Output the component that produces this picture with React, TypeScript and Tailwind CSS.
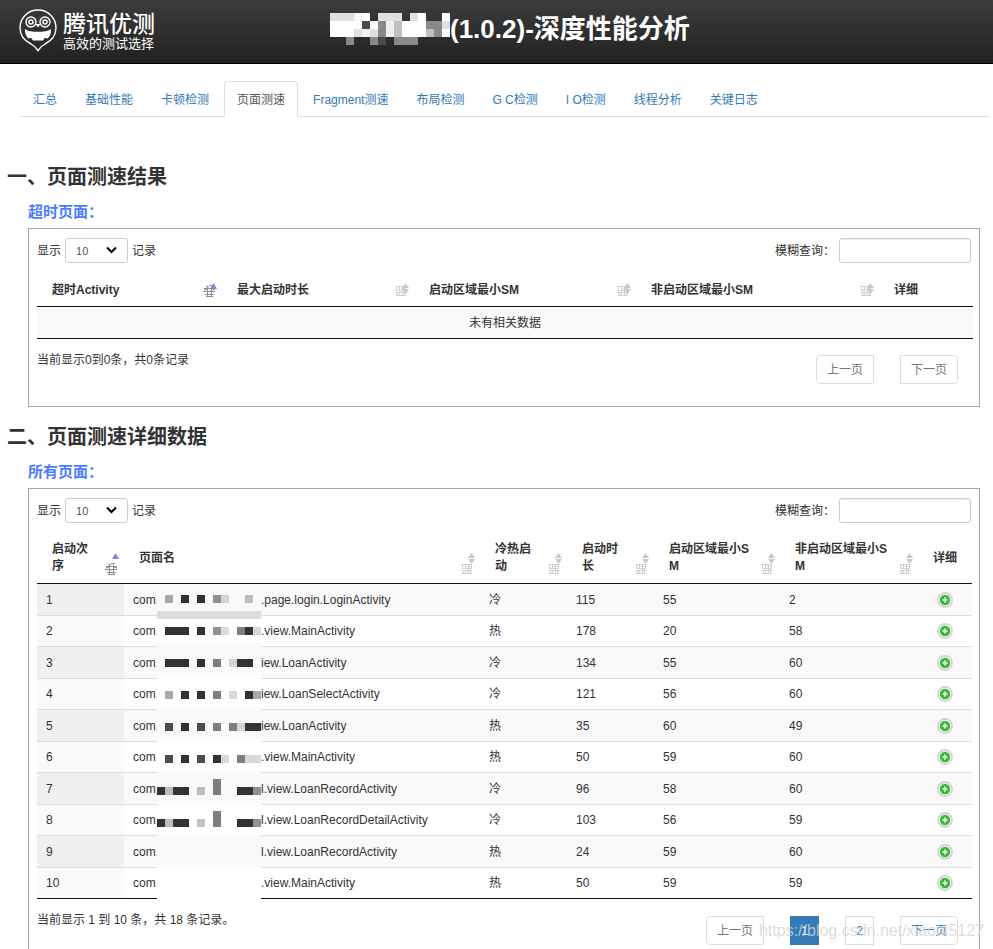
import type { ReactNode } from "react";

const tabs = ["汇总", "基础性能", "卡顿检测", "页面测速", "Fragment测速", "布局检测", "G C检测", "I O检测", "线程分析", "关键日志"];

type Row = [name: string, start: string, time: number, sm: number, idleSm: number];

const rows: Row[] = [
  [".page.login.LoginActivity", "冷", 115, 55, 2],
  [".view.MainActivity", "热", 178, 20, 58],
  ["iew.LoanActivity", "冷", 134, 55, 60],
  ["iew.LoanSelectActivity", "冷", 121, 56, 60],
  ["iew.LoanActivity", "热", 35, 60, 49],
  [".view.MainActivity", "热", 50, 59, 60],
  ["l.view.LoanRecordActivity", "冷", 96, 58, 60],
  ["l.view.LoanRecordDetailActivity", "冷", 103, 56, 59],
  ["l.view.LoanRecordActivity", "热", 24, 59, 60],
  [".view.MainActivity", "热", 50, 59, 59],
];

// Each block: column, top, span in columns, shade, height
type Block = [col: number, top: number, span: number, shade: string, height?: number];

const titleBlocks: Block[] = [
  [0, 0, 3, "#e0e0e0"], [3, 0, 1, "#f7f7f7"], [4, 0, 1, "#fff"], [6, 0, 3, "#e0e0e0"], [10, 0, 1, "#e0e0e0"], [11, 0, 1, "#fff"], [14, 0, 1, "#fff"],
  [0, 8, 4, "#fff"], [4, 8, 1, "#4a4a4a"], [5, 8, 1, "#fff"], [6, 8, 1, "#8a8a8a"], [7, 8, 1, "#f0f0f0"], [8, 8, 1, "#c0c0c0"], [9, 8, 3, "#fff"], [12, 8, 2, "#8a8a8a"], [14, 8, 1, "#e0e0e0"],
  [0, 16, 3, "#fff"], [3, 16, 1, "#e0e0e0"], [4, 16, 1, "#f0f0f0"], [5, 16, 1, "#e0e0e0"], [6, 16, 1, "#8a8a8a"], [7, 16, 1, "#f0f0f0"], [8, 16, 1, "#c0c0c0"], [9, 16, 3, "#fff"], [12, 16, 1, "#c0c0c0"], [13, 16, 1, "#8a8a8a"], [14, 16, 1, "#fff"],
  [2, 24, 1, "#8a8a8a"], [5, 24, 1, "#8a8a8a"], [6, 24, 1, "#4a4a4a"], [8, 24, 3, "#8a8a8a"],
];

const nameBlocks: Block[] = [
  [0, 0, 13, "#f9f9f9", 24], [0, 24, 13, "#ddd"], [0, 32, 13, "#fff", 24],
  [0, 56, 13, "#f9f9f9", 32], [0, 88, 13, "#fff", 32], [0, 120, 13, "#f9f9f9", 32],
  [0, 152, 13, "#fff", 32], [0, 184, 13, "#f9f9f9", 32], [0, 216, 13, "#fff", 32],
  [0, 248, 13, "#f9f9f9", 32], [0, 280, 13, "#fff", 34],
  [1, 8, 1, "#a8a8a8"], [3, 8, 1, "#333"], [5, 8, 1, "#333"], [7, 8, 1, "#909090"], [8, 8, 1, "#d4d4d4"], [11, 8, 1, "#bdbdbd"],
  [1, 40, 3, "#333"], [5, 40, 1, "#333"], [7, 40, 1, "#909090"], [8, 40, 1, "#dcdcdc"], [10, 40, 1, "#7d7d7d"], [11, 40, 1, "#333"], [12, 40, 1, "#d8d8d8"],
  [1, 72, 3, "#333"], [5, 72, 1, "#333"], [7, 72, 1, "#7d7d7d"], [9, 72, 1, "#d4d4d4"], [10, 72, 2, "#333"],
  [1, 104, 1, "#a8a8a8"], [3, 104, 1, "#333"], [5, 104, 1, "#333"], [7, 104, 1, "#7d7d7d"], [9, 104, 1, "#dadada"], [11, 104, 1, "#333"], [12, 104, 1, "#a8a8a8"],
  [1, 136, 1, "#4a4a4a"], [3, 136, 1, "#333"], [5, 136, 1, "#4a4a4a"], [7, 136, 1, "#7d7d7d"], [9, 136, 1, "#7d7d7d"], [10, 136, 1, "#d4d4d4"], [11, 136, 2, "#333"],
  [1, 168, 1, "#4a4a4a"], [3, 168, 1, "#333"], [5, 168, 1, "#4a4a4a"], [7, 168, 1, "#333"], [8, 168, 1, "#d8d8d8"], [10, 168, 1, "#7d7d7d"], [11, 168, 2, "#d8d8d8"],
  [0, 200, 1, "#333"], [1, 200, 1, "#bdbdbd"], [2, 200, 2, "#333"], [5, 200, 1, "#bdbdbd"], [7, 192, 1, "#7d7d7d", 16], [10, 200, 2, "#333"], [12, 200, 1, "#909090"],
  [0, 232, 1, "#333"], [1, 232, 1, "#bdbdbd"], [2, 232, 2, "#333"], [5, 232, 1, "#c4c4c4"], [7, 224, 1, "#7d7d7d", 16], [10, 232, 2, "#333"], [12, 232, 1, "#909090"],
];

function Mosaic({ blocks, width, height, className }: { blocks: Block[]; width: number; height: number; className: string }) {
  return (
    <svg className={className} width={width} height={height} shapeRendering="crispEdges" aria-hidden="true">
      {blocks.map(([col, top, span, shade, h = 8], i) => (
        <rect key={i} x={col * 8} y={top} width={span * 8} height={h} fill={shade} />
      ))}
    </svg>
  );
}

function OwlLogo() {
  return (
    <svg className="h-[43px] w-[38px] shrink-0" viewBox="0 0 38 43" fill="none" stroke="#fff" aria-hidden="true">
      <path d="M19 41.500c-1.800-2.800-3.600-4.700-7-6.500C5.600 31.800 1 26.500 1 18.800 1 8.800 9 1 19 1s18 7.800 18 17.800c0 7.700-4.600 13-11 16.200-3.400 1.800-5.200 3.700-7 6.500z" strokeWidth="1.400" />
      <circle cx="12" cy="13" r="5" strokeWidth="1.400" />
      <circle cx="26" cy="13" r="5" strokeWidth="1.400" />
      <circle cx="12" cy="13" r="2" strokeWidth="1.500" />
      <circle cx="26" cy="13" r="2" strokeWidth="1.500" />
      <path d="M16.500 15h5L19 18.500z" fill="#fff" stroke="none" />
      <path d="M6 20c3 2.500 8 2.700 13 2.700S29 22.500 32 20c.3 4-1 7.500-3.500 9.500l-2.500-.8-2 2.800h-10l-2-2.800-2.500.8C7 27.500 5.700 24 6 20z" fill="#fff" stroke="none" />
    </svg>
  );
}

function SortMark({ active, stacked }: { active?: boolean; stacked?: boolean }) {
  const ink = active ? "#8c8c8c" : "#cfcfcf";
  return (
    <svg className="shrink-0" width="14" height={stacked ? 22 : 14} viewBox={stacked ? "0 0 14 22" : "0 0 14 14"} aria-hidden="true">
      <g transform={stacked ? "translate(0 10)" : "translate(0 2)"} stroke={ink} fill="none">
        {active ? (
          <path d="M1 3.500h11M0 6.500h12M2 9.500h9M3 11.500h7M4.500 1.500v10M8.500 1.500v10M3 1l3 1M6 .500h4M1 5l3-1M9 4l3 1" />
        ) : (
          <path d="M.5 1.500h11M1.500 1.500v4h9v-4M4.500 1.500v4M7.500 1.500v9M.5 7.500h11M1 10.500h10M2.500 7.500v3M5 7.500l-1 3M9.500 6v5M6 3.500h4" />
        )}
      </g>
      {active ? (
        <path d="M10.500 0l3.500 6H7z" fill="#8186e0" />
      ) : (
        <path d="M10.500 0l3.500 5H7zM7 6h7l-3.500 5z" fill="#c9c9c9" />
      )}
    </svg>
  );
}

function HeadCell({ children, active, stacked }: { children: ReactNode; active?: boolean; stacked?: boolean }) {
  return (
    <th scope="col" className="border-b border-[#111] p-0 pr-[5px] pl-[15px] text-left font-bold">
      <div className={stacked ? "flex h-[34px] items-end justify-between gap-[10px]" : "flex items-center justify-between"}>
        <span className={stacked ? "min-w-0 self-center break-all" : "whitespace-nowrap"}>{children}</span>
        <SortMark active={active} stacked={stacked} />
      </div>
    </th>
  );
}

function Controls({ id }: { id: string }) {
  return (
    <div className="mr-[2px] mb-[10px] flex h-[25px] items-center justify-between">
      <label className="flex items-center gap-[4px]">
        显示
        <span className="relative">
          <select className="block h-[25px] w-[63px] appearance-none rounded-[3px] border border-[#ccc] bg-white pl-[10px] text-[11px] text-[#555]" defaultValue="10">
            <option>10</option>
            <option>25</option>
            <option>50</option>
          </select>
          <svg className="pointer-events-none absolute top-[8px] right-[11px]" width="11" height="8" fill="none" stroke="#000" strokeWidth="2" aria-hidden="true">
            <path d="M1 1.500l4.500 4.500L10 1.500" />
          </svg>
        </span>
        记录
      </label>
      <div className="flex items-center gap-[4px]">
        <label htmlFor={id}>模糊查询：</label>
        <input id={id} type="search" className="h-[25px] w-[132px] rounded-[3px] border border-[#ccc] px-2 shadow-[inset_0_1px_1px_rgba(0,0,0,0.075)]" />
      </div>
    </div>
  );
}

function PlusIcon() {
  return (
    <svg className="block" width="16" height="16" viewBox="0 0 16 16" aria-hidden="true">
      <circle cx="8" cy="8" r="7" fill="#fff" stroke="#d2d2d2" strokeWidth="1.800" />
      <circle cx="8" cy="8" r="5.200" fill="#37bb37" />
      <path d="M8 5.500v5M5.500 8h5" stroke="#fff" strokeWidth="1.600" />
    </svg>
  );
}

const pageButton = "h-[29px] border border-[#ddd] bg-white";

export default function App() {
  return (
    <div className="flex min-h-screen flex-col bg-white font-['Liberation_Sans','Noto_Sans_CJK_SC',sans-serif] text-[12px] leading-5 text-[#333]">
      <header className="flex h-16 items-start border-b border-black bg-linear-to-b from-[#3c3c3c] to-[#222] pl-[19px] text-white">
        <div className="flex pt-[9px]">
          <OwlLogo />
          <div className="ml-[6px] pt-[2px]">
            <div className="text-[23px] leading-[26px] font-medium">腾讯优测</div>
            <div className="text-[13px] leading-[14px]">高效的测试选择</div>
          </div>
        </div>
        <div className="ml-[175px] flex shrink-0 items-start pt-[13px]">
          <Mosaic className="shrink-0" blocks={titleBlocks} width={120} height={32} />
          <h1 className="text-[26px] leading-[33px] font-bold whitespace-nowrap">(1.0.2)-深度性能分析</h1>
        </div>
      </header>

      <nav className="mt-[17px] mr-1 ml-5 border-b border-[#ddd]">
        <ul className="-mb-px flex gap-[2px]">
          {tabs.map((tab) => (
            <li key={tab}>
              <a
                href="#"
                className={
                  tab === "页面测速"
                    ? "flex h-9 items-center rounded-t-[4px] border border-[#ddd] border-b-white bg-white px-3 pt-[2px] whitespace-nowrap text-[#555]"
                    : "flex h-9 items-center border border-transparent px-3 pt-[2px] whitespace-nowrap text-[#337ab7]"
                }
              >
                {tab}
              </a>
            </li>
          ))}
        </ul>
      </nav>

      <h2 className="mt-[48px] ml-[7px] text-[20px] leading-6 font-bold">一、页面测速结果</h2>
      <h3 className="mt-[13px] ml-7 text-[15px] font-bold text-[#4a7cff]">超时页面：</h3>
      <section className="mt-[6px] mr-[13px] ml-7 border border-[#a6a6a6] pt-[9px] pr-[6px] pb-[22px] pl-2">
        <Controls id="timeout-search" />
        <table className="w-full table-fixed border-separate border-spacing-0">
          <colgroup>
            <col className="w-[185px]" />
            <col className="w-[192px]" />
            <col />
            <col className="w-[243px]" />
            <col className="w-[94px]" />
          </colgroup>
          <thead>
            <tr className="h-[34px]">
              <HeadCell active>超时Activity</HeadCell>
              <HeadCell>最大启动时长</HeadCell>
              <HeadCell>启动区域最小SM</HeadCell>
              <HeadCell>非启动区域最小SM</HeadCell>
              <th scope="col" className="border-b border-[#111] p-0 pl-[15px] text-left font-bold">详细</th>
            </tr>
          </thead>
          <tbody>
            <tr className="h-8 bg-[#f9f9f9]">
              <td colSpan={5} className="border-b border-[#111] p-0 text-center">未有相关数据</td>
            </tr>
          </tbody>
        </table>
        <div className="flex items-start justify-between pt-[11px] pr-[15px]">
          <p>当前显示0到0条，共0条记录</p>
          <div className="mt-[5px] flex gap-[26px] text-[#777]">
            <button className={`${pageButton} w-[58px] rounded-l-[4px]`}>上一页</button>
            <button className={`${pageButton} w-[58px] rounded-r-[4px]`}>下一页</button>
          </div>
        </div>
      </section>

      <h2 className="mt-[18px] ml-[7px] text-[20px] leading-6 font-bold">二、页面测速详细数据</h2>
      <h3 className="mt-[13px] ml-7 text-[15px] font-bold text-[#4a7cff]">所有页面：</h3>
      <section className="relative mt-[6px] mr-[13px] ml-7 flex-1 border border-b-0 border-[#a6a6a6] pt-[9px] pr-[6px] pb-[4px] pl-2">
        <Controls id="all-search" />
        <div className="relative mr-px">
          <table className="w-full table-fixed border-separate border-spacing-0">
            <colgroup>
              <col className="w-[87px]" />
              <col />
              <col className="w-[87px]" />
              <col className="w-[87px]" />
              <col className="w-[126px]" />
              <col className="w-[138px]" />
              <col className="w-[54px]" />
            </colgroup>
            <thead>
              <tr className="h-[51px] leading-[17px]">
                <HeadCell active stacked>启动次序</HeadCell>
                <HeadCell stacked>页面名</HeadCell>
                <HeadCell stacked>冷热启动</HeadCell>
                <HeadCell stacked>启动时长</HeadCell>
                <HeadCell stacked>启动区域最小SM</HeadCell>
                <HeadCell stacked>非启动区域最小SM</HeadCell>
                <th scope="col" className="border-b border-[#111] p-0 pl-[15px] text-left font-bold">详细</th>
              </tr>
            </thead>
            <tbody className="[&_td]:border-b [&_td]:border-[#ddd] [&_td]:p-0 [&_td]:pl-[9px] [&>tr:last-child>td]:border-[#111]">
              {rows.map(([name, start, time, sm, idleSm], i) => (
                <tr key={i} className="group odd:h-8 odd:bg-[#f9f9f9] even:h-[31px]">
                  <td className="group-odd:bg-[#f0f0f0] group-even:bg-[#fafafa]">{i + 1}</td>
                  <td className="whitespace-nowrap">
                    <span className="inline-block w-[128px]">com.</span>
                    {name}
                  </td>
                  <td>{start}</td>
                  <td>{time}</td>
                  <td>{sm}</td>
                  <td>{idleSm}</td>
                  <td>
                    <button className="ml-[10px] block" aria-label="详细">
                      <PlusIcon />
                    </button>
                  </td>
                </tr>
              ))}
            </tbody>
          </table>
          <Mosaic className="absolute top-[54px] left-[120px]" blocks={nameBlocks} width={104} height={314} />
        </div>
        <div className="flex items-start justify-between pt-[11px] pr-[15px]">
          <p>当前显示 1 到 10 条，共 18 条记录。</p>
          <div className="mt-[6px] flex gap-[26px] text-[#337ab7]">
            <button className={`${pageButton} w-[58px] rounded-l-[4px] text-[#777]`}>上一页</button>
            <button className="h-[29px] w-[29px] border border-[#337ab7] bg-[#337ab7] text-white">1</button>
            <button className={`${pageButton} w-[29px]`}>2</button>
            <button className={`${pageButton} w-[58px] rounded-r-[4px]`}>下一页</button>
          </div>
        </div>
        <span className="pointer-events-none absolute right-[-5px] bottom-[8px] text-[16px] whitespace-nowrap text-[#d4d4d4]/80">
          https://blog.csdn.net/xiaoni5127
        </span>
      </section>
    </div>
  );
}
